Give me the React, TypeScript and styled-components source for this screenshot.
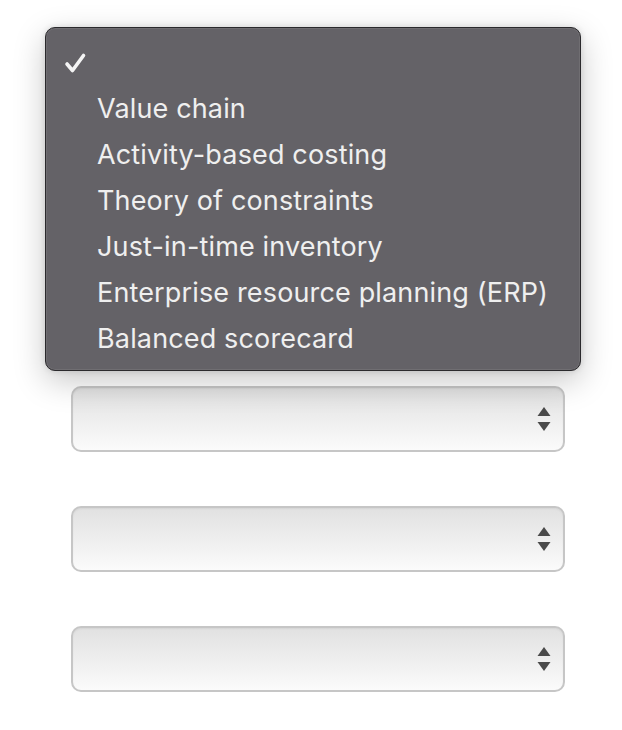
import React from 'react';
import styled, { createGlobalStyle } from 'styled-components';

const GlobalStyle = createGlobalStyle`
  html, body {
    margin: 0;
    padding: 0;
    background: #ffffff;
  }
  body {
    font-family: Inter, "Noto Sans", "Liberation Sans", sans-serif;
  }
`;

const Page = styled.div`
  position: relative;
  width: 622px;
  height: 730px;
  overflow: hidden;
`;

const SelectColumn = styled.div`
  display: flex;
  flex-direction: column;
  gap: 54px;
  padding: 146px 0 0 71px;
`;

const SelectBox = styled.div`
  box-sizing: border-box;
  width: 494px;
  height: 66px;
  border: 2px solid #c6c6c6;
  border-radius: 10px;
  background: linear-gradient(to bottom, #e1e1e1 0%, #eeeeee 50%, #fbfbfb 100%);
  box-shadow: inset 0 1px 2px rgba(0, 0, 0, 0.06);
  display: flex;
  align-items: center;
  justify-content: flex-end;
  padding-right: 12px;
`;

const Menu = styled.div`
  position: absolute;
  left: 45px;
  top: 27px;
  box-sizing: border-box;
  width: 536px;
  height: 344px;
  padding: 12px 0 9px;
  background: #646267;
  border: 1px solid #2b2a2d;
  border-radius: 10px;
  box-shadow: inset 0 0 0 1px rgba(255, 255, 255, 0.08),
    0 10px 32px rgba(0, 0, 0, 0.22), 0 0 6px rgba(0, 0, 0, 0.12);
  display: flex;
  flex-direction: column;
`;

const Option = styled.div`
  height: 46px;
  display: flex;
  align-items: center;
  color: #efefef;
  font-size: 27px;
  letter-spacing: 0.15px;
  white-space: nowrap;
  padding-left: 17px;
`;

const CheckSlot = styled.span`
  width: 34px;
  flex: none;
  display: flex;
  align-items: center;
`;

const Label = styled.span`
  padding-left: 0;
`;

const Arrows = () => (
  <svg width="14" height="26" viewBox="0 0 14 26">
    <polygon points="7,1 13.5,10 0.5,10" fill="#4a4a4a" />
    <polygon points="0.5,16 13.5,16 7,25" fill="#4a4a4a" />
  </svg>
);

const Check = () => (
  <svg width="24" height="22" viewBox="0 0 24 22">
    <polyline
      points="4,12 9.5,18.5 20.5,3.5"
      fill="none"
      stroke="#f4f4f4"
      strokeWidth="3.6"
      strokeLinecap="round"
      strokeLinejoin="round"
    />
  </svg>
);

const options = [
  '',
  'Value chain',
  'Activity-based costing',
  'Theory of constraints',
  'Just-in-time inventory',
  'Enterprise resource planning (ERP)',
  'Balanced scorecard',
];

export default function App() {
  return (
    <Page>
      <GlobalStyle />
      <SelectColumn>
        {[0, 1, 2, 3, 4].map((i) => (
          <SelectBox key={i}>
            <Arrows />
          </SelectBox>
        ))}
      </SelectColumn>
      <Menu>
        {options.map((opt, i) => (
          <Option key={i}>
            <CheckSlot>{i === 0 && <Check />}</CheckSlot>
            <Label>{opt}</Label>
          </Option>
        ))}
      </Menu>
    </Page>
  );
}
